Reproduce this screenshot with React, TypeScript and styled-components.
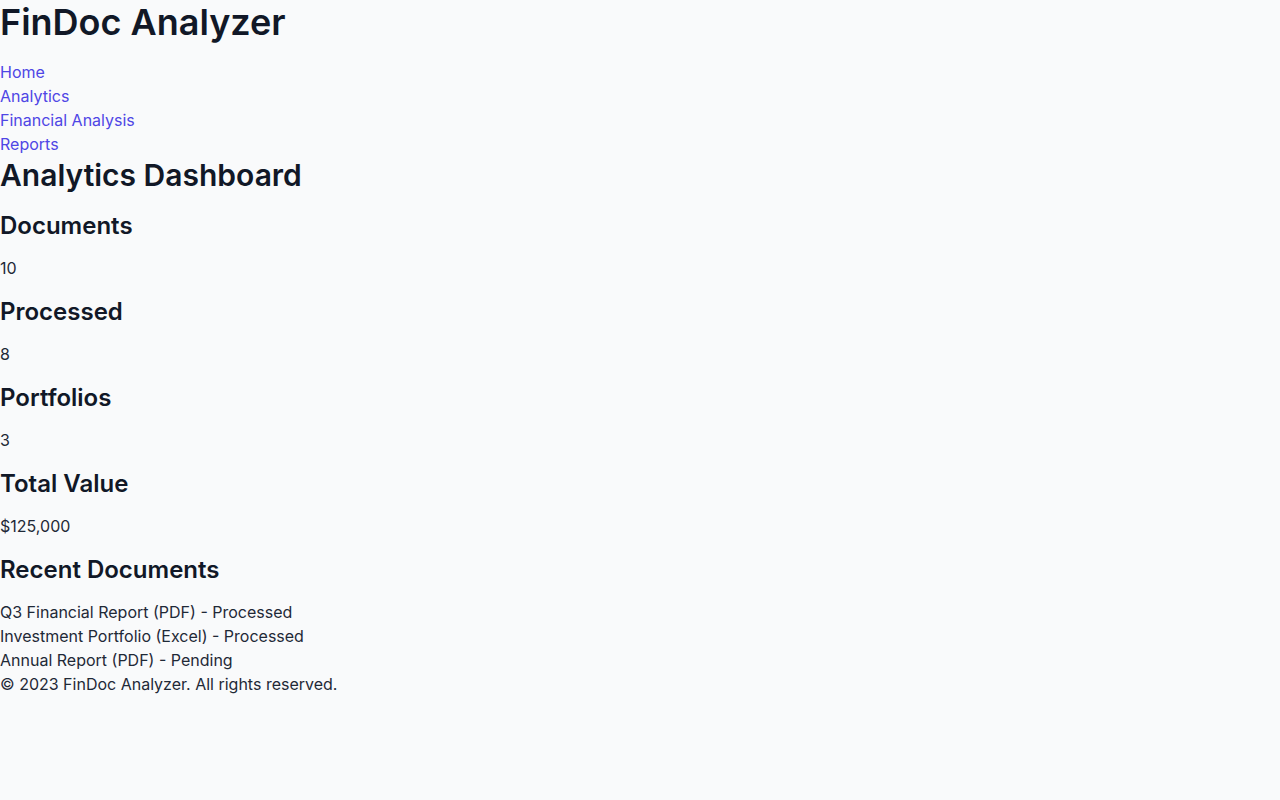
import React from "react";
import styled, { createGlobalStyle } from "styled-components";

const Global = createGlobalStyle`
  html, body { margin: 0; padding: 0; }
  body {
    background: #f9fafb;
    color: #1f2937;
    font-family: Inter, "Noto Sans", sans-serif;
    font-size: 16px;
    line-height: 24px;
  }
  * { box-sizing: border-box; }
`;

const Header = styled.header`
  display: flex;
  flex-direction: column;
`;

const Title = styled.h1`
  margin: 0 0 15px;
  font-size: 36px;
  line-height: 45px;
  font-weight: 600;
  color: #111827;
`;

const Nav = styled.nav`
  display: flex;
  flex-direction: column;
`;

const NavLink = styled.a`
  color: #4f46e5;
  text-decoration: none;
  font-size: 16px;
  line-height: 24px;
`;

const Main = styled.main`
  display: flex;
  flex-direction: column;
`;

const PageTitle = styled.h2`
  margin: 0;
  font-size: 30px;
  line-height: 38px;
  font-weight: 600;
  color: #111827;
`;

const SectionTitle = styled.h3`
  margin: 16px 0 0;
  font-size: 24px;
  line-height: 32px;
  font-weight: 600;
  color: #111827;
`;

const Value = styled.p`
  margin: 14px 0 0;
`;

const List = styled.ul`
  list-style: none;
  margin: 14px 0 0;
  padding: 0;
`;

const Item = styled.li``;

const Footer = styled.footer``;

const stats = [
  ["Documents", "10"],
  ["Processed", "8"],
  ["Portfolios", "3"],
  ["Total Value", "$125,000"],
];

export default function App() {
  return (
    <>
      <Global />
      <Header>
        <Title>FinDoc Analyzer</Title>
        <Nav>
          <NavLink href="#">Home</NavLink>
          <NavLink href="#">Analytics</NavLink>
          <NavLink href="#">Financial Analysis</NavLink>
          <NavLink href="#">Reports</NavLink>
        </Nav>
      </Header>
      <Main>
        <PageTitle>Analytics Dashboard</PageTitle>
        {stats.map(([label, value]) => (
          <React.Fragment key={label}>
            <SectionTitle>{label}</SectionTitle>
            <Value>{value}</Value>
          </React.Fragment>
        ))}
        <SectionTitle>Recent Documents</SectionTitle>
        <List>
          <Item>Q3 Financial Report (PDF) - Processed</Item>
          <Item>Investment Portfolio (Excel) - Processed</Item>
          <Item>Annual Report (PDF) - Pending</Item>
        </List>
      </Main>
      <Footer>© 2023 FinDoc Analyzer. All rights reserved.</Footer>
    </>
  );
}
